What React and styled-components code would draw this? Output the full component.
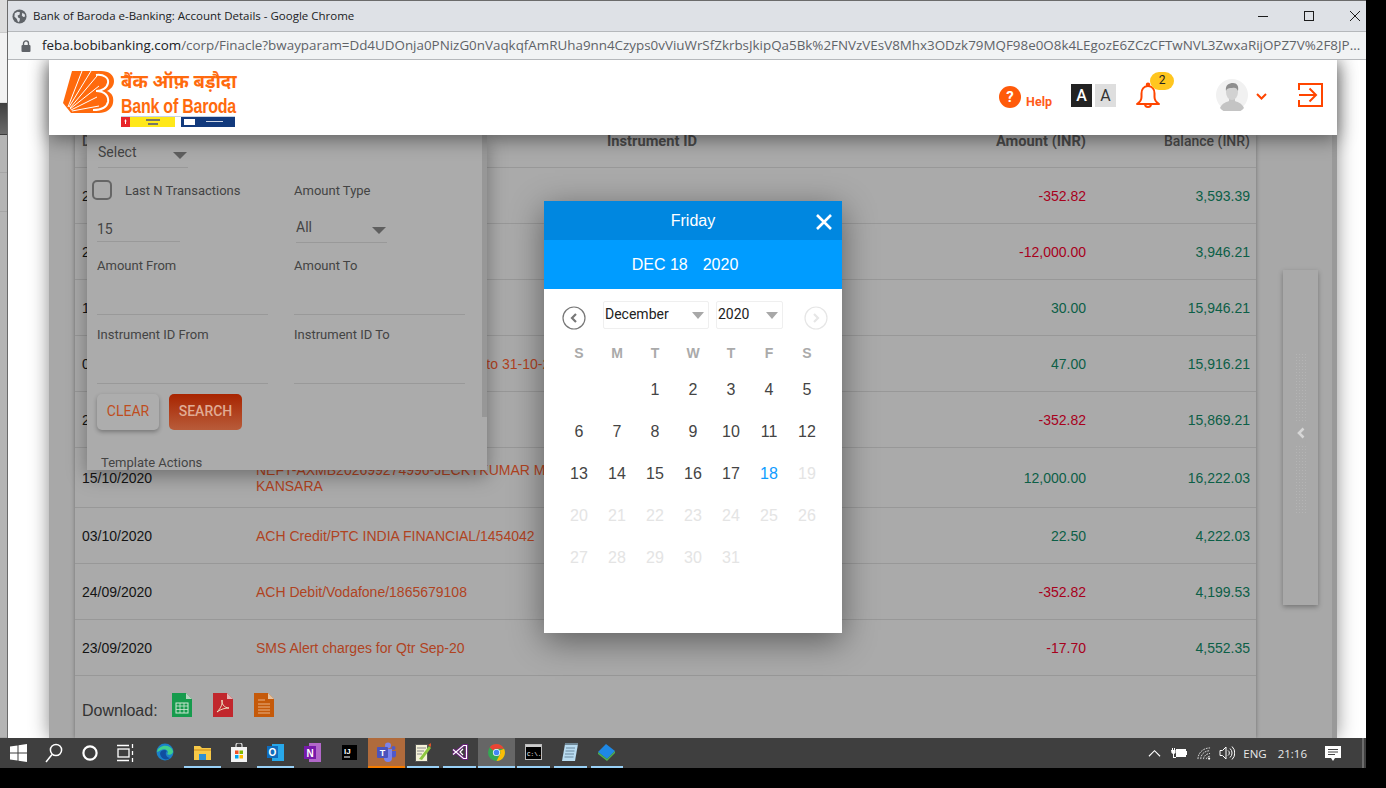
import React from "react";
import styled, { createGlobalStyle } from "styled-components";

const GlobalStyle = createGlobalStyle`
    html, body {
        margin: 0;
        background: #000;
        overflow: hidden;
    }
    * {
        box-sizing: border-box;
    }
`;

const URL_HOST = "feba.bobibanking.com";
const URL_PATH =
    "/corp/Finacle?bwayparam=Dd4UDOnja0PNizG0nVaqkqfAmRUha9nn4Czyps0vViuWrSfZkrbsJkipQa5Bk%2FNVzVEsV8Mhx3ODzk79MQF98e0O8k4LEgozE6ZCzCFTwNVL3ZwxaRijOPZ7V%2F8JP...";

const ROWS = [
    { date: "25/11/2020", desc: "ACH Debit/Vodafone/1865679108", amount: "-352.82", balance: "3,593.39" },
    { date: "24/11/2020", desc: "NEFT Debit/Transfer", amount: "-12,000.00", balance: "3,946.21" },
    { date: "15/11/2020", desc: "Cashback Credit", amount: "30.00", balance: "15,946.21" },
    { date: "01/11/2020", desc: "Int.Pd:Saving A/c Period 01-08-2020 to 31-10-2020", amount: "47.00", balance: "15,916.21" },
    { date: "24/10/2020", desc: "ACH Debit/Vodafone/1865679108", amount: "-352.82", balance: "15,869.21" },
    { date: "15/10/2020", desc: "NEFT-AXMB202699274996-JECKYKUMAR M KANSARA", amount: "12,000.00", balance: "16,222.03", wrap: true },
    { date: "03/10/2020", desc: "ACH Credit/PTC INDIA FINANCIAL/1454042", amount: "22.50", balance: "4,222.03" },
    { date: "24/09/2020", desc: "ACH Debit/Vodafone/1865679108", amount: "-352.82", balance: "4,199.53" },
    { date: "23/09/2020", desc: "SMS Alert charges for Qtr Sep-20", amount: "-17.70", balance: "4,552.35" },
];

const WEEK_DAYS = ["S", "M", "T", "W", "T", "F", "S"];
const TODAY = 18;
const LAST_ENABLED = 18;
const DAYS = Array.from({ length: 31 }, (_, i) => i + 1);

function GlobeIcon() {
    return (
        <svg width="15" height="15" viewBox="0 0 16 16">
            <circle cx="8" cy="8" r="7.5" fill="#5f6368" />
            <path d="M3 4.5 L6 3 L8.5 3.5 L8 6 L6 7 L6.5 9 L8.5 10 L8 13 L6.5 14 L5 10.5 L2.5 8 Z" fill="#dee1e6" />
            <path d="M11 4 L13.5 5.5 L14 8 L12 8.5 L10.5 7 Z" fill="#dee1e6" />
        </svg>
    );
}

function LockIcon() {
    return (
        <svg width="10" height="12" viewBox="0 0 10 12">
            <path d="M2.5 5 V3.4 a2.5 2.5 0 0 1 5 0 V5" fill="none" stroke="#5f6368" strokeWidth="1.4" />
            <rect x="0.5" y="5" width="9" height="7" rx="1" fill="#5f6368" />
        </svg>
    );
}

function WindowGlyph({ kind }) {
    return (
        <svg width="12" height="12" viewBox="0 0 12 12" fill="none" stroke="#1c1c1c" strokeWidth="1">
            {kind === "min" && <path d="M1 6.5 H11" />}
            {kind === "max" && <rect x="1.5" y="1.5" width="9" height="9" />}
            {kind === "close" && <path d="M1 1 L11 11 M11 1 L1 11" />}
        </svg>
    );
}

function LogoMark() {
    return (
        <svg width="52" height="44" viewBox="0 0 52 44">
            <path
                d="M9 1 H38 C46 1 51 5 51 11 C51 16 48 19 44 21 C49 23 51 27 50 33 C49 39 43 43 36 43 H8 L0 33 Z"
                fill="#ff6a0d"
            />
            <g stroke="#fff" strokeWidth="1" fill="none">
                <path d="M5 37 L19 1" />
                <path d="M6 37 L28 1" />
                <path d="M7 38 L34 6" />
                <path d="M7 39 L36 16" />
                <path d="M8 40 L34 27" />
                <path d="M9 41 L36 36" />
                <path d="M33 5 C41 4 46 8 45 13 C44 18 39 21 33 21 C42 21 46 26 45 32 C44 37 39 40 30 40" strokeWidth="2" />
            </g>
        </svg>
    );
}

function LogoStrip() {
    return (
        <svg width="114" height="11" viewBox="0 0 114 11">
            <rect width="114" height="1" fill="#c7d3e3" />
            <rect y="1" width="9" height="10" fill="#e8262a" />
            <path d="M3.5 5 H5.5 M4.5 3.5 V8" stroke="#fff" strokeWidth="1" />
            <rect x="9" y="1" width="45" height="10" fill="#ffe81a" />
            <rect x="25" y="3" width="14" height="2" fill="#776" />
            <rect x="27" y="7" width="10" height="2" fill="#776" />
            <rect x="60" y="1" width="54" height="10" fill="#123a7d" />
            <rect x="63" y="3" width="11" height="6" fill="#fff" />
            <rect x="85" y="5" width="17" height="1" fill="#cdd6e6" />
        </svg>
    );
}

function BellIcon() {
    return (
        <svg width="26" height="27" viewBox="0 0 26 27" fill="none" stroke="#ff4500" strokeWidth="2">
            <path d="M13 4 C8.5 4 6.5 7.5 6.5 11.5 V15 C6.5 18.5 4.5 20.5 2 22 H24 C21.5 20.5 19.5 18.5 19.5 15 V11.5 C19.5 7.5 17.5 4 13 4 Z" strokeLinejoin="round" />
            <circle cx="13" cy="2.6" r="1.2" />
            <path d="M10 22 a3 3 0 0 0 6 0" />
        </svg>
    );
}

function AvatarIcon() {
    return (
        <svg width="32" height="32" viewBox="0 0 32 32">
            <circle cx="16" cy="16" r="16" fill="#f1f1f1" />
            <path d="M4 29 C6 24 11 23 13 22 V19 H19 V22 C21 23 26 24 28 29 A16 16 0 0 1 4 29 Z" fill="#c4c4c4" />
            <ellipse cx="16" cy="13" rx="6" ry="8" fill="#d2d2d2" />
            <path d="M10 12 C9 6 13 4 17 4 C21 4 23 7 22 12 C21 9 19 8 16 9 C13 9 11 9 10 12 Z" fill="#8e8e8e" />
        </svg>
    );
}

function ChevronDown() {
    return (
        <svg width="11" height="7" viewBox="0 0 11 7" fill="none" stroke="#ff4500" strokeWidth="2">
            <path d="M1 1 L5.5 5.5 L10 1" />
        </svg>
    );
}

function ExitIcon() {
    return (
        <svg width="25" height="24" viewBox="0 0 25 24" fill="none" stroke="#ff4500" strokeWidth="2">
            <path d="M1 7 V1 H24 V23 H1 V17" />
            <path d="M1 12 H17 M11.5 5.5 L18 12 L11.5 18.5" />
        </svg>
    );
}

function RoundArrow({ dir, faded }) {
    const color = faded ? "#e6e6e6" : "#777";
    return (
        <svg width="24" height="24" viewBox="0 0 24 24" fill="none" stroke={color}>
            <circle cx="12" cy="12" r="11" strokeWidth="1.2" />
            <path d={dir === "left" ? "M14 8 L10 12 L14 16" : "M10 8 L14 12 L10 16"} strokeWidth="2.2" />
        </svg>
    );
}

function FileIcon({ color, fold, children }) {
    return (
        <svg width="20" height="24" viewBox="0 0 20 24">
            <path d="M0 0 H14 L20 6 V24 H0 Z" fill={color} />
            <path d="M14 0 V6 H20 Z" fill={fold} />
            {children}
        </svg>
    );
}

function WindowsLogo() {
    return (
        <svg width="17" height="18" viewBox="0 0 17 18" fill="#fff">
            <path d="M0 2.5 L7.5 1.4 V8.4 H0 Z M8.5 1.2 L17 0 V8.4 H8.5 Z M0 9.4 H7.5 V16.5 L0 15.4 Z M8.5 9.4 H17 V18 L8.5 16.7 Z" />
        </svg>
    );
}

function SearchGlass() {
    return (
        <svg width="18" height="20" viewBox="0 0 18 20" fill="none" stroke="#fff" strokeWidth="1.5">
            <circle cx="11" cy="7" r="5.6" />
            <path d="M7 11.5 L1 19" />
        </svg>
    );
}

function CortanaRing() {
    return (
        <svg width="16" height="16" viewBox="0 0 16 16" fill="none" stroke="#fff" strokeWidth="2.2">
            <circle cx="8" cy="8" r="6.6" />
        </svg>
    );
}

function TaskViewIcon() {
    return (
        <svg width="18" height="18" viewBox="0 0 18 18" fill="none" stroke="#fff" strokeWidth="1.3">
            <rect x="1" y="5" width="11" height="8" />
            <path d="M0 1.5 H12 M0 16.5 H12 M15.5 0 V4 M15.5 7 V11 M15.5 14 V18" />
        </svg>
    );
}

function EdgeIcon() {
    return (
        <svg width="18" height="18" viewBox="0 0 18 18">
            <circle cx="9" cy="9" r="8.5" fill="#1b80c8" />
            <path d="M1 9 C2 2 14 0 17 8 C17.5 11 13 13 11 11 C14 8 9 4.5 5 7 C3 8 1.5 9 1 9 Z" fill="#3fcf8e" />
            <path d="M4 11 C4 7 9 6 11 8 C9 9 9 14 14 15 C10 18 5 16 4 11 Z" fill="#0f4fa0" />
        </svg>
    );
}

function FolderIcon() {
    return (
        <svg width="17" height="15" viewBox="0 0 17 15">
            <path d="M0 1 H6 L8 3 H17 V15 H0 Z" fill="#f7c948" />
            <rect y="4" width="17" height="2" fill="#e2a92e" />
            <rect x="5" y="9" width="7" height="6" fill="#2d8fd5" />
        </svg>
    );
}

function StoreIcon() {
    return (
        <svg width="16" height="19" viewBox="0 0 16 19">
            <path d="M5 4 V2 a3 2 0 0 1 6 0 V4" fill="none" stroke="#ddd" strokeWidth="1.2" />
            <rect y="4" width="16" height="15" fill="#f4f4f4" />
            <rect x="4" y="7.5" width="3.5" height="3.5" fill="#f25022" />
            <rect x="8.5" y="7.5" width="3.5" height="3.5" fill="#7fba00" />
            <rect x="4" y="12" width="3.5" height="3.5" fill="#00a4ef" />
            <rect x="8.5" y="12" width="3.5" height="3.5" fill="#ffb900" />
        </svg>
    );
}

function OutlookIcon() {
    return (
        <svg width="17" height="19" viewBox="0 0 17 19">
            <rect x="5" y="1" width="12" height="17" fill="#28a8ea" />
            <rect y="3" width="11" height="12" fill="#0f6cbd" />
            <text x="5.5" y="13" textAnchor="middle" fill="#fff" fontSize="10" fontWeight="700" fontFamily="Liberation Sans, sans-serif">O</text>
        </svg>
    );
}

function OneNoteIcon() {
    return (
        <svg width="17" height="19" viewBox="0 0 17 19">
            <rect x="5" y="0" width="12" height="19" fill="#b268c9" />
            <rect y="3" width="12" height="13" fill="#7719aa" />
            <text x="6" y="13.5" textAnchor="middle" fill="#fff" fontSize="10" fontWeight="700" fontFamily="Liberation Sans, sans-serif">N</text>
        </svg>
    );
}

function IntellijIcon() {
    return (
        <svg width="15" height="15" viewBox="0 0 15 15">
            <rect width="15" height="15" fill="#000" />
            <text x="2" y="9" fill="#fff" fontSize="8" fontWeight="700" fontFamily="Liberation Sans, sans-serif">IJ</text>
            <rect x="2" y="11.5" width="6" height="1" fill="#fff" />
        </svg>
    );
}

function TeamsIcon() {
    return (
        <svg width="19" height="20" viewBox="0 0 19 20">
            <circle cx="11" cy="3.5" r="3" fill="#7b83eb" />
            <circle cx="16.5" cy="6" r="2" fill="#5059c9" />
            <path d="M7 7 H15 V16 a4 4 0 0 1 -8 0 Z" fill="#7b83eb" />
            <path d="M15 9 H19 V14 a3 3 0 0 1 -4 1 Z" fill="#5059c9" />
            <rect y="5" width="11" height="11" rx="1" fill="#4b53bc" />
            <text x="5.5" y="14" textAnchor="middle" fill="#fff" fontSize="9" fontWeight="700" fontFamily="Liberation Sans, sans-serif">T</text>
        </svg>
    );
}

function NotepadPlusIcon() {
    return (
        <svg width="16" height="19" viewBox="0 0 16 19">
            <rect x="0.5" y="1.5" width="12" height="17" fill="#f4f1d8" stroke="#555" />
            <path d="M2 5 H11 M2 8 H9 M2 11 H7" stroke="#888" />
            <path d="M4 16 L14 3 L16 5 L7 17 Z" fill="#8dc63f" />
            <path d="M13 2 L16 0 L16 4 Z" fill="#d9552c" />
        </svg>
    );
}

function VisualStudioIcon() {
    return (
        <svg width="16" height="16" viewBox="0 0 16 16" fill="none" stroke="#fff" strokeWidth="1.6">
            <path d="M1 5.5 L11.5 14.5 H14.5 V1.5 H11.5 L1 10.5" stroke="#68217a" strokeWidth="3.2" />
            <path d="M1 5.5 L11.5 14.5 H14.5 V1.5 H11.5 L1 10.5 M11 5 L8 8 L11 11" strokeWidth="1.2" />
        </svg>
    );
}

function ChromeIcon() {
    return (
        <svg width="17" height="17" viewBox="0 0 18 18">
            <circle cx="9" cy="9" r="9" fill="#34a853" />
            <path d="M9 0 A9 9 0 0 1 17 5 H9 A4 4 0 0 0 5.5 7 L1.8 3.5 A9 9 0 0 1 9 0 Z" fill="#ea4335" />
            <path d="M17 5 A9 9 0 0 1 9 18 L12.6 11 A4 4 0 0 0 12.5 7 Z" fill="#fbbc05" />
            <circle cx="9" cy="9" r="3.8" fill="#fff" />
            <circle cx="9" cy="9" r="3" fill="#4285f4" />
        </svg>
    );
}

function CmdIcon() {
    return (
        <svg width="17" height="16" viewBox="0 0 17 16">
            <rect x="0.5" y="0.5" width="16" height="15" fill="#000" stroke="#bbb" />
            <rect x="1" y="1" width="15" height="2" fill="#ccc" />
            <text x="2" y="11.5" fill="#fff" fontSize="6" fontFamily="Liberation Mono, monospace">C:\.</text>
        </svg>
    );
}

function NotepadIcon() {
    return (
        <svg width="16" height="19" viewBox="0 0 16 19">
            <path d="M3 1 H16 L13 18 H0 Z" fill="#b9dcf1" />
            <path d="M4 5 H13 M3.5 8 H12.5 M3 11 H12 M2.5 14 H11.5" stroke="#6c8aa0" />
            <path d="M3 0 H16 V2 H3 Z" fill="#6f8796" />
        </svg>
    );
}

function BookIcon() {
    return (
        <svg width="17" height="17" viewBox="0 0 17 17">
            <path d="M8 0 L17 7 L9 15 L0 8 Z" fill="#1e88e5" />
            <path d="M0 8 L9 15 L17 7 V9 L9 17 L0 10 Z" fill="#4caf50" />
        </svg>
    );
}

const TASK_APPS = [
    { key: "edge", icon: <EdgeIcon /> },
    { key: "explorer", icon: <FolderIcon />, running: true, grouped: true },
    { key: "store", icon: <StoreIcon /> },
    { key: "outlook", icon: <OutlookIcon />, running: true, grouped: true },
    { key: "onenote", icon: <OneNoteIcon /> },
    { key: "intellij", icon: <IntellijIcon /> },
    { key: "teams", icon: <TeamsIcon />, flash: true },
    { key: "notepadpp", icon: <NotepadPlusIcon />, running: true },
    { key: "vs", icon: <VisualStudioIcon />, running: true },
    { key: "chrome", icon: <ChromeIcon />, running: true, active: true, grouped: true },
    { key: "cmd", icon: <CmdIcon />, running: true },
    { key: "notepad", icon: <NotepadIcon />, running: true },
    { key: "book", icon: <BookIcon />, running: true },
];

export default function App() {
    return (
        <Desktop>
            <GlobalStyle />
            <Upper>
                <BackStrip>
                    <BackPiece $h={33} $bg="#dcdcdc" />
                    <BackPiece $h={70} $bg="#f2f2f2" />
                    <BackPiece $h={32} $bg="linear-gradient(#3f3f3f, #6a6a6a)" />
                    <BackPiece $h={38} $bg="#b5b5b5" />
                    <BackPiece $h={39} $bg="#b5b5b5" />
                    <BackPiece $h={526} $bg="#b5b5b5" />
                </BackStrip>
                <ChromeWindow>
                    <TitleBar>
                        <GlobeIcon />
                        <WindowTitle>Bank of Baroda e-Banking: Account Details - Google Chrome</WindowTitle>
                        <WindowControls>
                            <WindowButton><WindowGlyph kind="min" /></WindowButton>
                            <WindowButton><WindowGlyph kind="max" /></WindowButton>
                            <WindowButton><WindowGlyph kind="close" /></WindowButton>
                        </WindowControls>
                    </TitleBar>
                    <AddressBar>
                        <LockIcon />
                        <UrlText><UrlHost>{URL_HOST}</UrlHost>{URL_PATH}</UrlText>
                    </AddressBar>
                    <Viewport>
                        <Page>
                            <Header>
                                <Logo>
                                    <LogoMark />
                                    <LogoWords>
                                        <LogoHindi>बैंक ऑफ़ बड़ौदा</LogoHindi>
                                        <LogoEnglish>Bank of Baroda</LogoEnglish>
                                        <LogoStrip />
                                    </LogoWords>
                                </Logo>
                                <HeaderTools>
                                    <HelpBadge>?</HelpBadge>
                                    <HelpText>Help</HelpText>
                                    <FontSwitch $dark>A</FontSwitch>
                                    <FontSwitch>A</FontSwitch>
                                    <BellWrap>
                                        <BellIcon />
                                        <BellCount>2</BellCount>
                                    </BellWrap>
                                    <AvatarWrap><AvatarIcon /></AvatarWrap>
                                    <ChevronWrap><ChevronDown /></ChevronWrap>
                                    <ExitWrap><ExitIcon /></ExitWrap>
                                </HeaderTools>
                            </Header>
                            <Body>
                                <Card>
                                    <HeadRow>
                                        <HeadCell>Date</HeadCell>
                                        <HeadCell>Description</HeadCell>
                                        <HeadCell $bold>Instrument ID</HeadCell>
                                        <HeadCell $right $bold>Amount (INR)</HeadCell>
                                        <HeadCell $right>Balance (INR)</HeadCell>
                                    </HeadRow>
                                    {ROWS.map((row) => (
                                        <Row key={row.date + row.balance}>
                                            <DateCell>{row.date}</DateCell>
                                            <DescCell $wrap={row.wrap}>{row.desc}</DescCell>
                                            <span />
                                            <MoneyCell $negative={row.amount.startsWith("-")}>{row.amount}</MoneyCell>
                                            <MoneyCell>{row.balance}</MoneyCell>
                                        </Row>
                                    ))}
                                    <Footer>
                                        <DownloadLabel>Download:</DownloadLabel>
                                        <FileIcon color="#169b4d" fold="#b7d3c0">
                                            <rect x="4" y="10" width="12" height="10" fill="none" stroke="#cfe8d6" />
                                            <path d="M4 13 H16 M4 16.5 H16 M8 10 V20 M12 10 V20" stroke="#cfe8d6" strokeWidth="0.8" />
                                        </FileIcon>
                                        <FileIcon color="#c1272d" fold="#e0b4b4">
                                            <path d="M4 19 C8 15 10 10 9 7 C8 10 11 15 16 15 C12 15 8 16 4 19 Z" fill="none" stroke="#eec" strokeWidth="0.9" />
                                        </FileIcon>
                                        <FileIcon color="#c55a0a" fold="#e6c29f">
                                            <path d="M4 7 H11 M4 11 H16 M4 14 H16 M4 17 H16 M4 20 H16" stroke="#eab184" strokeWidth="1" />
                                        </FileIcon>
                                    </Footer>
                                </Card>
                                <Rail>
                                    <SideTab>
                                        <TabDots />
                                        <TabChevron viewBox="0 0 10 12" width="10" height="12">
                                            <path d="M7.5 1.5 L3 6 L7.5 10.5" fill="none" stroke="#d6d6d6" strokeWidth="2.6" />
                                        </TabChevron>
                                        <TabDots />
                                    </SideTab>
                                </Rail>
                                <RailEdge />
                                <FilterPanel>
                                    <PanelScroll />
                                    <FieldGrid>
                                        <SelectField $w={90} $h={33} $pad={9}>
                                            <span>Select</span>
                                            <Caret />
                                        </SelectField>
                                        <span />
                                        <CheckLine>
                                            <CheckBox />
                                            <CenteredLabel>Last N Transactions</CenteredLabel>
                                        </CheckLine>
                                        <CenteredLabel>Amount Type</CenteredLabel>
                                        <ValueField $w={83}>15</ValueField>
                                        <SelectField $w={91} $h={31} $offset={2} $pad={7}>
                                            <span>All</span>
                                            <Caret />
                                        </SelectField>
                                        <InputBlock $pad={15}><FieldLabel>Amount From</FieldLabel></InputBlock>
                                        <InputBlock $pad={15}><FieldLabel>Amount To</FieldLabel></InputBlock>
                                        <InputBlock $pad={12}><FieldLabel>Instrument ID From</FieldLabel></InputBlock>
                                        <InputBlock $pad={12}><FieldLabel>Instrument ID To</FieldLabel></InputBlock>
                                    </FieldGrid>
                                    <PanelActions>
                                        <ClearButton>CLEAR</ClearButton>
                                        <SearchButton>SEARCH</SearchButton>
                                    </PanelActions>
                                    <TemplateTitle>Template Actions</TemplateTitle>
                                </FilterPanel>
                            </Body>
                            <ModalLayer>
                                <DateModal>
                                    <ModalTop>
                                        Friday
                                        <CloseGlyph viewBox="0 0 18 18" width="18" height="18">
                                            <path d="M2 2 L16 16 M16 2 L2 16" stroke="#fff" strokeWidth="2.6" />
                                        </CloseGlyph>
                                    </ModalTop>
                                    <ModalDate>
                                        <span>DEC 18</span>
                                        <span>2020</span>
                                    </ModalDate>
                                    <MonthNav>
                                        <NavArrow><RoundArrow dir="left" /></NavArrow>
                                        <MonthSelect $w={106} $left={17}>
                                            December
                                            <SmallCaret />
                                        </MonthSelect>
                                        <MonthSelect $w={67} $left={7}>
                                            2020
                                            <SmallCaret />
                                        </MonthSelect>
                                        <NavArrow $left={21}><RoundArrow dir="right" faded /></NavArrow>
                                    </MonthNav>
                                    <WeekRow>
                                        {WEEK_DAYS.map((d, i) => <WeekDay key={i}>{d}</WeekDay>)}
                                    </WeekRow>
                                    <DayGrid>
                                        <span />
                                        <span />
                                        {DAYS.map((d) => (
                                            <DayCell key={d} $today={d === TODAY} $off={d > LAST_ENABLED}>{d}</DayCell>
                                        ))}
                                    </DayGrid>
                                </DateModal>
                            </ModalLayer>
                        </Page>
                    </Viewport>
                </ChromeWindow>
            </Upper>
            <Taskbar>
                <SystemButton><WindowsLogo /></SystemButton>
                <SystemButton><SearchGlass /></SystemButton>
                <SystemButton><CortanaRing /></SystemButton>
                <SystemButton><TaskViewIcon /></SystemButton>
                <AppStrip>
                    {TASK_APPS.map((app) => (
                        <TaskApp key={app.key} $running={app.running} $active={app.active} $flash={app.flash} $grouped={app.grouped}>
                            {app.icon}
                        </TaskApp>
                    ))}
                </AppStrip>
                <Tray>
                    <svg width="13" height="8" viewBox="0 0 14 8" fill="none" stroke="#fff" strokeWidth="1.2"><path d="M1 7.5 L7 1.5 L13 7.5" /></svg>
                    <svg width="16" height="10" viewBox="0 0 16 10" fill="#fff"><rect x="5" y="1" width="10" height="8" /><rect x="15" y="3" width="1" height="4" /><path d="M0 2 H1 V0 H2 V2 H3 V0 H4 V2 H4.5 V5 L3 6 V9 H5 V10 H2 V6 L0.5 5 Z" /></svg>
                    <svg width="14" height="13" viewBox="0 0 15 14" fill="none" stroke="#ddd" strokeWidth="1"><path d="M1 13 C1 6 7 1 14 1 M4 13 C4 8 8 4 14 4 M7 13 C7 10 10 7 14 7 M10 13 C10 11.5 12 10 14 10" strokeDasharray="2 1" /><circle cx="13" cy="12.5" r="1.2" fill="#fff" stroke="none" /></svg>
                    <VolumeGlyph viewBox="0 0 16 14" width="16" height="14" fill="none" stroke="#fff" strokeWidth="1"><path d="M1 4.5 H3.5 L7 1 V13 L3.5 9.5 H1 Z M9 4.5 a3 3 0 0 1 0 5 M11 2.5 a6 6 0 0 1 0 9 M13 0.5 a9 9 0 0 1 0 13" /></VolumeGlyph>
                    <TrayText>ENG</TrayText>
                    <Clock>21:16</Clock>
                    <NotifyIcon viewBox="0 0 16 15" width="16" height="15">
                        <path d="M0 0 H16 V12 H10 L8 15 L6 12 H0 Z" fill="#fff" />
                        <path d="M3 3.5 H13 M3 6 H13 M3 8.5 H10" stroke="#444" />
                    </NotifyIcon>
                    <DesktopPeek />
                </Tray>
            </Taskbar>
        </Desktop>
    );
}

const Desktop = styled.div`
    width: 1366px;
    height: 768px;
    display: flex;
    flex-direction: column;
    overflow: hidden;
`;

const Upper = styled.div`
    height: 738px;
    display: flex;
`;

const BackStrip = styled.div`
    width: 7px;
    display: flex;
    flex-direction: column;
`;

const BackPiece = styled.div`
    height: ${(p) => p.$h}px;
    background: ${(p) => p.$bg};
    border-bottom: 1px solid rgba(0, 0, 0, 0.08);
`;

const ChromeWindow = styled.div`
    flex: 1;
    min-width: 0;
    display: flex;
    flex-direction: column;
    border-left: 1px solid #6b6b6b;
    border-top: 1px solid #6b6b6b;
    font-family: "Open Sans", sans-serif;
`;

const TitleBar = styled.div`
    height: 31px;
    flex: none;
    display: flex;
    align-items: center;
    padding-left: 4px;
    background: #dee1e6;
    border-bottom: 1px solid #b5b8bb;
`;

const WindowTitle = styled.div`
    margin: -2px 0 0 6px;
    font-size: 11.5px;
    color: #202124;
`;

const WindowControls = styled.div`
    margin-left: auto;
    display: flex;
    gap: 34px;
    padding-right: 5px;
`;

const WindowButton = styled.div`
    width: 12px;
    height: 12px;
    display: flex;
`;

const AddressBar = styled.div`
    height: 28px;
    flex: none;
    display: flex;
    align-items: center;
    padding-left: 13px;
    background: #f1f3f4;
    border-bottom: 1px solid #b5b8bb;
`;

const UrlText = styled.div`
    margin: -2px 0 0 11px;
    font-family: "Open Sans", sans-serif;
    font-size: 13.4px;
    color: #5f6368;
    white-space: nowrap;
`;

const UrlHost = styled.span`
    color: #202124;
`;

const Viewport = styled.div`
    flex: 1;
    min-height: 0;
    display: flex;
    padding: 0 29px 0 41px;
    background: #fff;
    overflow: hidden;
`;

const Page = styled.div`
    position: relative;
    width: 1288px;
    height: 100%;
    display: flex;
    flex-direction: column;
    background: #a8a8a8;
    box-shadow: 0 0 18px rgba(0, 0, 0, 0.45);
`;

const Header = styled.header`
    position: relative;
    z-index: 3;
    flex: none;
    height: 75px;
    display: flex;
    justify-content: space-between;
    padding: 10px 14px 0 14px;
    background: #fff;
    box-shadow: 0 4px 18px rgba(0, 0, 0, 0.45);
`;

const Logo = styled.div`
    display: flex;
    align-items: flex-start;
    gap: 6px;
`;

const LogoWords = styled.div`
    display: flex;
    flex-direction: column;
    width: 116px;
    margin-top: -2px;
`;

const LogoHindi = styled.div`
    height: 28px;
    font-family: "Noto Sans", "DejaVu Sans", sans-serif;
    font-size: 18.4px;
    line-height: 25px;
    font-weight: 700;
    color: #ff6a0d;
    white-space: nowrap;
`;

const LogoEnglish = styled.div`
    height: 20px;
    font-family: "Liberation Sans", sans-serif;
    font-size: 20px;
    line-height: 21px;
    font-weight: 700;
    letter-spacing: -0.3px;
    color: #ff6a0d;
    white-space: nowrap;
    transform: scaleX(0.8);
    transform-origin: left center;
`;

const HeaderTools = styled.div`
    display: flex;
    align-items: flex-start;
    font-family: "Roboto", sans-serif;
`;

const HelpBadge = styled.div`
    width: 22px;
    height: 22px;
    margin-top: 16px;
    border-radius: 50%;
    background: #ff5a0a;
    color: #fff;
    font-size: 15px;
    font-weight: 700;
    line-height: 22px;
    text-align: center;
`;

const HelpText = styled.div`
    margin: 25px 19px 0 5px;
    font-size: 12.5px;
    line-height: 14px;
    font-weight: 700;
    color: #ff5a1a;
`;

const FontSwitch = styled.div`
    width: 21px;
    height: 23px;
    margin: 14px 3px 0 0;
    background: ${(p) => (p.$dark ? "#222" : "#dedede")};
    color: ${(p) => (p.$dark ? "#fff" : "#333")};
    font-size: 16px;
    line-height: 23px;
    font-weight: ${(p) => (p.$dark ? 500 : 400)};
    text-align: center;
`;

const BellWrap = styled.div`
    position: relative;
    width: 26px;
    margin: 12px 0 0 16px;
`;

const BellCount = styled.div`
    position: absolute;
    left: 15px;
    top: -10px;
    width: 24px;
    height: 18px;
    border-radius: 9px;
    background: #ffc61f;
    color: #222;
    font-size: 12px;
    line-height: 16px;
    text-align: center;
`;

const AvatarWrap = styled.div`
    margin: 9px 0 0 55px;
`;

const ChevronWrap = styled.div`
    display: flex;
    margin: 23px 0 0 8px;
`;

const ExitWrap = styled.div`
    margin: 13px 0 0 31px;
`;

const Body = styled.div`
    position: relative;
    flex: 1;
    min-height: 0;
    display: flex;
    padding-left: 26px;
    overflow: hidden;
`;

const Card = styled.div`
    width: 1181px;
    flex: none;
    display: flex;
    flex-direction: column;
    background: #aaaaaa;
    box-shadow: 0 0 4px rgba(0, 0, 0, 0.35);
`;

const ROW_COLUMNS = "174px 351px 200px 279px 164px";

const HeadRow = styled.div`
    flex: none;
    height: 33px;
    display: grid;
    grid-template-columns: ${ROW_COLUMNS};
    padding-left: 7px;
    font-family: "Roboto", sans-serif;
    border-bottom: 1px solid #989898;
`;

const HeadCell = styled.div`
    font-size: ${(p) => (p.$bold ? 14.7 : 14)}px;
    line-height: 12px;
    font-weight: ${(p) => (p.$bold ? 700 : 500)};
    color: #4a4a4a;
    text-align: ${(p) => (p.$right ? "right" : "left")};
`;

const Row = styled.div`
    flex: none;
    min-height: 56px;
    display: grid;
    grid-template-columns: ${ROW_COLUMNS};
    align-items: center;
    padding: 13px 0 13px 7px;
    border-bottom: 1px solid #989898;
    font-family: "Liberation Sans", Arial, sans-serif;
    font-size: 14px;
    line-height: 16px;
`;

const DateCell = styled.div`
    color: #141414;
`;

const DescCell = styled.div`
    color: #b0431f;
    width: 340px;
    margin-top: 1px;
    white-space: ${(p) => (p.$wrap ? "normal" : "nowrap")};
`;

const MoneyCell = styled.div`
    text-align: right;
    color: ${(p) => (p.$negative ? "#a8001c" : "#0c5f47")};
`;

const Footer = styled.div`
    flex: 1;
    display: flex;
    align-items: center;
    gap: 21px;
    padding: 0 0 5px 7px;
`;

const DownloadLabel = styled.div`
    margin-right: -7px;
    padding-top: 13px;
    font-family: "Liberation Sans", Arial, sans-serif;
    font-size: 16px;
    color: #333;
`;

const Rail = styled.div`
    flex: 1;
    display: flex;
    justify-content: flex-end;
    padding: 135px 14px 0 0;
`;

const RailEdge = styled.div`
    width: 5px;
    flex: none;
    background: #999;
`;

const SideTab = styled.div`
    width: 35px;
    height: 335px;
    display: flex;
    flex-direction: column;
    align-items: center;
    justify-content: center;
    gap: 6px;
    padding-bottom: 9px;
    background: #a9a9a9;
    box-shadow: 0 2px 5px rgba(0, 0, 0, 0.3);
`;

const TabDots = styled.div`
    width: 11px;
    height: 68px;
    background-image: radial-gradient(circle, #b4b4b4 0.6px, transparent 0.8px);
    background-size: 3px 3px;
`;

const TabChevron = styled.svg`
    flex: none;
`;

const FilterPanel = styled.div`
    position: absolute;
    left: 38px;
    top: 0;
    width: 400px;
    height: 335px;
    padding: 0 0 0 10px;
    background: #ababab;
    box-shadow: 0 6px 18px rgba(0, 0, 0, 0.35);
    font-family: "Roboto", sans-serif;
    font-size: 14px;
    color: #444;
    overflow: hidden;
`;

const PanelScroll = styled.div`
    position: absolute;
    right: 0;
    top: 0;
    width: 5px;
    height: 282px;
    background: #979797;
`;

const FieldGrid = styled.div`
    display: grid;
    grid-template-columns: 197px 197px;
    grid-template-rows: 33px 44px 31px 72px 69px;
`;

const SelectField = styled.div`
    width: ${(p) => p.$w}px;
    height: ${(p) => p.$h}px;
    margin-left: ${(p) => p.$offset ?? 1}px;
    padding-top: ${(p) => p.$pad}px;
    display: flex;
    justify-content: space-between;
    border-bottom: 1px solid #999;
    line-height: 16px;
    color: #444;
`;

const Caret = styled.div`
    width: 0;
    height: 0;
    margin: 8px 1px 0 0;
    border-left: 7px solid transparent;
    border-right: 7px solid transparent;
    border-top: 7px solid #5f5f5f;
`;

const CheckLine = styled.div`
    display: flex;
    align-items: center;
    margin-left: -5px;
    padding-bottom: 1px;
`;

const CheckBox = styled.div`
    width: 20px;
    height: 20px;
    margin-right: 13px;
    border: 2px solid #666;
    border-radius: 5px;
`;

const FieldLabel = styled.div`
    font-size: 13px;
    line-height: 16px;
    color: #444;
    white-space: nowrap;
`;

const CenteredLabel = styled(FieldLabel)`
    align-self: center;
    padding-top: 2px;
`;

const ValueField = styled.div`
    width: ${(p) => p.$w}px;
    height: 30px;
    padding-top: 9px;
    line-height: 16px;
    border-bottom: 1px solid #999;
`;

const InputBlock = styled.div`
    width: 171px;
    height: 100%;
    padding-top: ${(p) => p.$pad}px;
    border-bottom: 1px solid #999;
`;

const PanelActions = styled.div`
    display: flex;
    gap: 10px;
    margin-top: 10px;
`;

const ClearButton = styled.div`
    width: 62px;
    height: 36px;
    border-radius: 5px;
    background: #adadad;
    box-shadow: 0 2px 4px rgba(0, 0, 0, 0.3);
    color: #bf4d1e;
    font-size: 14px;
    line-height: 34px;
    text-align: center;
`;

const SearchButton = styled.div`
    width: 73px;
    height: 36px;
    border-radius: 5px;
    background: linear-gradient(#a82400, #b85c3a);
    color: #e0ab94;
    font-size: 14px;
    font-weight: 500;
    line-height: 34px;
    text-align: center;
`;

const TemplateTitle = styled.div`
    margin: 25px 0 0 4px;
    font-size: 13px;
    line-height: 16px;
    color: #444;
`;

const ModalLayer = styled.div`
    position: absolute;
    inset: 141px 0 0 0;
    z-index: 4;
    display: flex;
    justify-content: center;
    align-items: flex-start;
`;

const DateModal = styled.div`
    width: 298px;
    height: 432px;
    background: #fff;
    box-shadow: 0 8px 32px rgba(0, 0, 0, 0.45);
    font-family: "Liberation Sans", Arial, sans-serif;
`;

const ModalTop = styled.div`
    position: relative;
    height: 39px;
    background: #0087e0;
    color: #fff;
    font-size: 16px;
    line-height: 39px;
    text-align: center;
`;

const CloseGlyph = styled.svg`
    position: absolute;
    right: 9px;
    top: 12px;
`;

const ModalDate = styled.div`
    height: 49px;
    display: flex;
    justify-content: center;
    align-items: center;
    gap: 15px;
    padding-right: 16px;
    background: #009cff;
    color: #fff;
    font-size: 16px;
`;

const MonthNav = styled.div`
    display: flex;
    align-items: flex-start;
    height: 28px;
    margin-top: 12px;
    padding-left: 18px;
`;

const NavArrow = styled.div`
    display: flex;
    margin: 5px 0 0 ${(p) => p.$left ?? 0}px;
`;

const MonthSelect = styled.div`
    position: relative;
    width: ${(p) => p.$w}px;
    height: 28px;
    margin-left: ${(p) => p.$left}px;
    padding-left: 1px;
    border: 1px solid #efefef;
    border-radius: 2px;
    font-family: "Roboto", sans-serif;
    font-size: 14px;
    line-height: 25px;
    color: #222;
`;

const SmallCaret = styled.span`
    position: absolute;
    right: 4px;
    top: 10px;
    border-left: 6px solid transparent;
    border-right: 6px solid transparent;
    border-top: 7px solid #a8a8a8;
`;

const WeekRow = styled.div`
    display: grid;
    grid-template-columns: repeat(7, 38px);
    margin-top: 14px;
    padding-left: 16px;
`;

const WeekDay = styled.div`
    height: 20px;
    font-size: 14px;
    font-weight: 700;
    line-height: 20px;
    text-align: center;
    color: #aaa;
`;

const DayGrid = styled.div`
    display: grid;
    grid-template-columns: repeat(7, 38px);
    grid-auto-rows: 42px;
    margin-top: 6px;
    padding-left: 16px;
`;

const DayCell = styled.div`
    font-size: 16px;
    line-height: 42px;
    text-align: center;
    color: ${(p) => (p.$today ? "#0f9cff" : p.$off ? "#e4e4e4" : "#444")};
`;

const Taskbar = styled.div`
    height: 30px;
    flex: none;
    display: flex;
    background: #3f3f3f;
`;

const SystemButton = styled.div`
    width: 36px;
    display: flex;
    align-items: center;
    justify-content: center;
`;

const AppStrip = styled.div`
    display: flex;
    margin-left: 3px;
`;

const TaskApp = styled.div`
    position: relative;
    width: 36.8px;
    display: flex;
    align-items: center;
    justify-content: center;
    background: ${(p) => (p.$flash ? "#b06b3c" : p.$active ? "#666" : "transparent")};
    border-bottom: 2px solid ${(p) => (p.$flash ? "#f57c00" : "transparent")};

    &::after {
        content: "";
        display: ${(p) => (p.$running ? "block" : "none")};
        position: absolute;
        left: ${(p) => (p.$grouped ? 0 : 2)}px;
        right: ${(p) => (p.$grouped ? 0 : 2)}px;
        bottom: -2px;
        height: 2px;
        background: #99d1f7;
    }
`;

const Tray = styled.div`
    flex: 1;
    display: flex;
    align-items: center;
    justify-content: flex-end;
    gap: 10px;
    color: #e8e8e8;
`;

const VolumeGlyph = styled.svg`
    margin-left: -2px;
`;

const TrayText = styled.div`
    margin-left: -2px;
    font-family: "Open Sans", sans-serif;
    font-size: 11.5px;
`;

const Clock = styled(TrayText)`
    margin-left: 1px;
`;

const NotifyIcon = styled.svg`
    margin-left: 8px;
`;

const DesktopPeek = styled.div`
    width: 2px;
    height: 100%;
    margin: 0 2px 0 11px;
    background: #6c6c6c;
`;
